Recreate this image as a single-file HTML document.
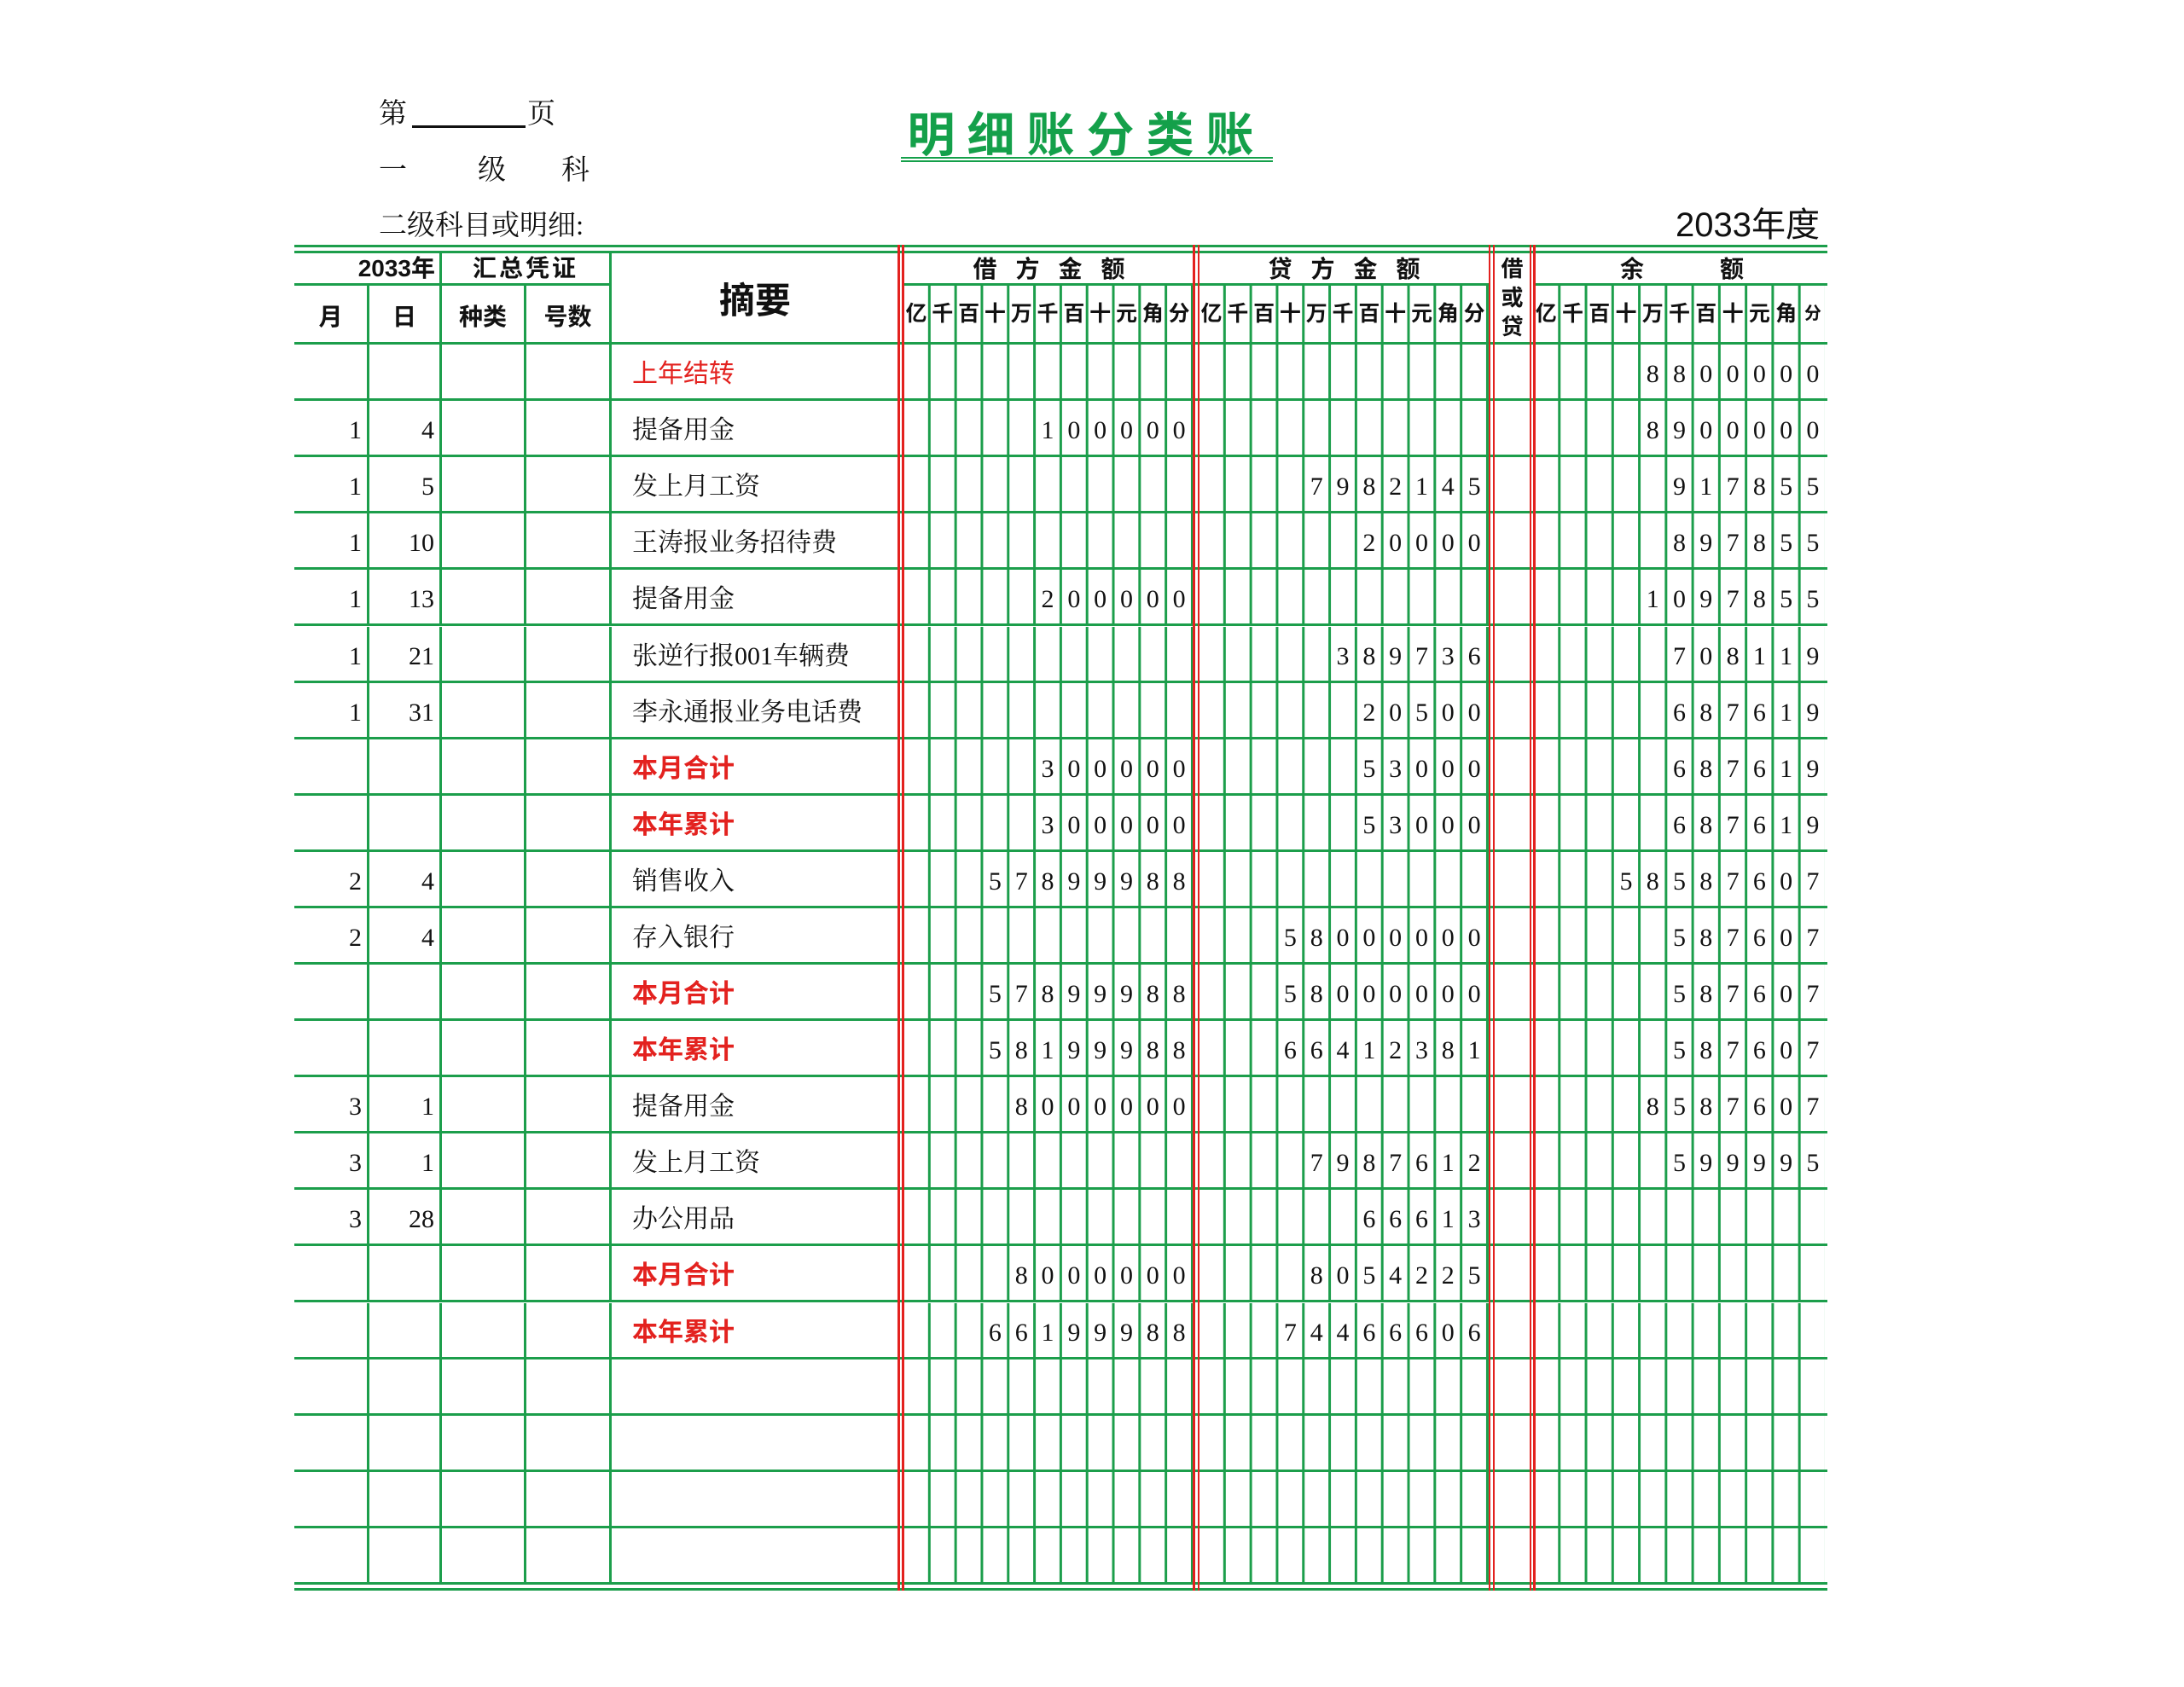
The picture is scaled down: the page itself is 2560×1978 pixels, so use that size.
<!DOCTYPE html>
<html><head><meta charset="utf-8"><style>
html,body{margin:0;padding:0;background:#fff}
body{width:2560px;height:1978px;position:relative;overflow:hidden;font-family:"Liberation Serif","Noto Serif CJK SC",serif;color:#111}
.a{position:absolute}
.hl{position:absolute;height:3px;background:#1c9e4b}
.vl{position:absolute;width:3px;background:#1c9e4b}
.rl{position:absolute;width:2.5px;background:#e3221f;top:287px;height:1578px}
.r{position:absolute;left:345px;width:1797px;height:66.09px;display:flex;border-bottom:3px solid #1c9e4b;box-sizing:border-box;line-height:70px;font-size:30px}
.r>div{box-sizing:border-box;height:100%;flex:none}
.m{width:88px;border-right:3px solid #1c9e4b;text-align:right;padding-right:6px}
.d{width:85px;border-right:3px solid #1c9e4b;text-align:right;padding-right:6px}
.k{width:99px;border-right:3px solid #1c9e4b}
.h{width:100px;border-right:3px solid #1c9e4b}
.z{width:336px;padding-left:24px;font-family:"Liberation Serif","Noto Serif CJK SC",serif;white-space:nowrap}
.z.rd{color:#e3221f;font-family:"Liberation Sans","Noto Sans CJK SC",sans-serif}
.z.rb{color:#e3221f;font-family:"Liberation Sans","Noto Sans CJK SC",sans-serif;font-weight:bold}
.s{width:7px}.s5{width:5px}
.j{width:41px}
.b,.bb{display:flex;justify-content:flex-end;background-repeat:repeat-x}
.b{width:339px;background-image:linear-gradient(to right,transparent calc(100% - 3px),#1c9e4b calc(100% - 3px));background-size:30.818px 100%}
.bb{width:344px;background-image:linear-gradient(to left,#fff 3px,transparent 3px),linear-gradient(to right,transparent calc(100% - 3px),#1c9e4b calc(100% - 3px));background-size:100% 100%,31.27px 100%;background-repeat:no-repeat,repeat-x}
.b i,.bb i{font-style:normal;display:inline-block;box-sizing:border-box;padding-right:3px;text-align:center}
.b i{width:30.818px}.bb i{width:31.27px}
.hd{position:absolute;font-family:"Liberation Sans","Noto Sans CJK SC",sans-serif;font-weight:bold;font-size:28px;text-align:center;line-height:36px;color:#111}
.un{position:absolute;top:335px;height:66px;display:flex;font-family:"Liberation Sans","Noto Sans CJK SC",sans-serif;font-weight:bold;font-size:25px;line-height:66px}
.un i{font-style:normal;display:inline-block;box-sizing:border-box;padding-right:3px;text-align:center}
.tp{position:absolute;font-family:"Liberation Serif","Noto Serif CJK SC",serif;font-size:33px;line-height:40px;color:#111}
</style></head><body>

<div class="tp" style="left:444px;top:114px">第</div>
<div class="a" style="left:483px;top:147px;width:133px;height:3px;background:#111"></div>
<div class="tp" style="left:618px;top:114px">页</div>
<div class="tp" style="left:444px;top:180px">一</div>
<div class="tp" style="left:560px;top:180px">级</div>
<div class="tp" style="left:658px;top:180px">科</div>
<div class="tp" style="left:444px;top:245px">二级科目或明细:</div>
<div class="a" style="left:1900px;top:241px;width:233px;text-align:right;font-family:'Liberation Sans','Noto Sans CJK SC',sans-serif;font-size:40px;line-height:46px;color:#111">2033年度</div>
<div class="a" style="left:1053px;top:126px;width:441px;text-align:center;font-family:'Liberation Sans','Noto Sans CJK SC',sans-serif;font-weight:bold;font-size:56px;line-height:66px;letter-spacing:14px;color:#14a04a">明细账分类账</div>
<div class="a" style="left:1056px;top:184px;width:436px;height:2px;background:#14a04a"></div>
<div class="a" style="left:1056px;top:188px;width:436px;height:2px;background:#14a04a"></div>

<div class="hl" style="left:345px;top:287px;width:1797px"></div>
<div class="hl" style="left:345px;top:294px;width:1797px"></div>
<div class="hl" style="left:345px;top:332px;width:372px"></div>
<div class="hl" style="left:1060px;top:332px;width:685px"></div>
<div class="hl" style="left:1798px;top:332px;width:344px"></div>
<div class="hl" style="left:345px;top:401px;width:1797px"></div>
<div class="vl" style="left:515px;top:297px;height:104px"></div>
<div class="vl" style="left:714px;top:297px;height:104px"></div>
<div class="vl" style="left:430px;top:335px;height:66px"></div>
<div class="vl" style="left:614px;top:335px;height:66px"></div>

<div class="hd" style="left:345px;top:297px;width:165px;text-align:right;font-family:'Liberation Sans Narrow','Liberation Sans','Noto Sans CJK SC',sans-serif">2033年</div>
<div class="hd" style="left:518px;top:297px;width:196px;letter-spacing:3px">汇总凭证</div>
<div class="hd" style="left:345px;top:354px;width:85px">月</div>
<div class="hd" style="left:433px;top:354px;width:82px">日</div>
<div class="hd" style="left:518px;top:354px;width:96px">种类</div>
<div class="hd" style="left:617px;top:354px;width:97px">号数</div>
<div class="hd" style="left:717px;top:328px;width:336px;font-size:42px;line-height:50px">摘要</div>
<div class="hd" style="left:1060px;top:298px;width:339px;letter-spacing:22px;text-indent:22px">借方金额</div>
<div class="hd" style="left:1406px;top:298px;width:339px;letter-spacing:22px;text-indent:22px">贷方金额</div>
<div class="hd" style="left:1752px;top:298px;width:41px;font-size:26px;line-height:34px;height:106px;overflow:hidden">借<br>或<br>贷</div>
<div class="hd" style="left:1893px;top:298px;width:40px">余</div>
<div class="hd" style="left:2010px;top:298px;width:40px">额</div>
<div class="un b" style="left:1060px;display:flex"><i>亿</i><i>千</i><i>百</i><i>十</i><i>万</i><i>千</i><i>百</i><i>十</i><i>元</i><i>角</i><i>分</i></div>
<div class="un b" style="left:1406px;display:flex"><i>亿</i><i>千</i><i>百</i><i>十</i><i>万</i><i>千</i><i>百</i><i>十</i><i>元</i><i>角</i><i>分</i></div>
<div class="un bb" style="left:1798px;display:flex"><i>亿</i><i>千</i><i>百</i><i>十</i><i>万</i><i>千</i><i>百</i><i>十</i><i>元</i><i>角</i><i style="font-size:20px">分</i></div>

<div class="r" style="top:404px"><div class="m"></div><div class="d"></div><div class="k"></div><div class="h"></div><div class="z rd">上年结转</div><div class="s"></div><div class="b"></div><div class="s"></div><div class="b"></div><div class="s"></div><div class="j"></div><div class="s5"></div><div class="bb"><i>8</i><i>8</i><i>0</i><i>0</i><i>0</i><i>0</i><i>0</i></div></div>
<div class="r" style="top:470.1px"><div class="m">1</div><div class="d">4</div><div class="k"></div><div class="h"></div><div class="z">提备用金</div><div class="s"></div><div class="b"><i>1</i><i>0</i><i>0</i><i>0</i><i>0</i><i>0</i></div><div class="s"></div><div class="b"></div><div class="s"></div><div class="j"></div><div class="s5"></div><div class="bb"><i>8</i><i>9</i><i>0</i><i>0</i><i>0</i><i>0</i><i>0</i></div></div>
<div class="r" style="top:536.2px"><div class="m">1</div><div class="d">5</div><div class="k"></div><div class="h"></div><div class="z">发上月工资</div><div class="s"></div><div class="b"></div><div class="s"></div><div class="b"><i>7</i><i>9</i><i>8</i><i>2</i><i>1</i><i>4</i><i>5</i></div><div class="s"></div><div class="j"></div><div class="s5"></div><div class="bb"><i>9</i><i>1</i><i>7</i><i>8</i><i>5</i><i>5</i></div></div>
<div class="r" style="top:602.3px"><div class="m">1</div><div class="d">10</div><div class="k"></div><div class="h"></div><div class="z">王涛报业务招待费</div><div class="s"></div><div class="b"></div><div class="s"></div><div class="b"><i>2</i><i>0</i><i>0</i><i>0</i><i>0</i></div><div class="s"></div><div class="j"></div><div class="s5"></div><div class="bb"><i>8</i><i>9</i><i>7</i><i>8</i><i>5</i><i>5</i></div></div>
<div class="r" style="top:668.4px"><div class="m">1</div><div class="d">13</div><div class="k"></div><div class="h"></div><div class="z">提备用金</div><div class="s"></div><div class="b"><i>2</i><i>0</i><i>0</i><i>0</i><i>0</i><i>0</i></div><div class="s"></div><div class="b"></div><div class="s"></div><div class="j"></div><div class="s5"></div><div class="bb"><i>1</i><i>0</i><i>9</i><i>7</i><i>8</i><i>5</i><i>5</i></div></div>
<div class="r" style="top:734.5px"><div class="m">1</div><div class="d">21</div><div class="k"></div><div class="h"></div><div class="z">张逆行报001车辆费</div><div class="s"></div><div class="b"></div><div class="s"></div><div class="b"><i>3</i><i>8</i><i>9</i><i>7</i><i>3</i><i>6</i></div><div class="s"></div><div class="j"></div><div class="s5"></div><div class="bb"><i>7</i><i>0</i><i>8</i><i>1</i><i>1</i><i>9</i></div></div>
<div class="r" style="top:800.5px"><div class="m">1</div><div class="d">31</div><div class="k"></div><div class="h"></div><div class="z">李永通报业务电话费</div><div class="s"></div><div class="b"></div><div class="s"></div><div class="b"><i>2</i><i>0</i><i>5</i><i>0</i><i>0</i></div><div class="s"></div><div class="j"></div><div class="s5"></div><div class="bb"><i>6</i><i>8</i><i>7</i><i>6</i><i>1</i><i>9</i></div></div>
<div class="r" style="top:866.6px"><div class="m"></div><div class="d"></div><div class="k"></div><div class="h"></div><div class="z rb">本月合计</div><div class="s"></div><div class="b"><i>3</i><i>0</i><i>0</i><i>0</i><i>0</i><i>0</i></div><div class="s"></div><div class="b"><i>5</i><i>3</i><i>0</i><i>0</i><i>0</i></div><div class="s"></div><div class="j"></div><div class="s5"></div><div class="bb"><i>6</i><i>8</i><i>7</i><i>6</i><i>1</i><i>9</i></div></div>
<div class="r" style="top:932.7px"><div class="m"></div><div class="d"></div><div class="k"></div><div class="h"></div><div class="z rb">本年累计</div><div class="s"></div><div class="b"><i>3</i><i>0</i><i>0</i><i>0</i><i>0</i><i>0</i></div><div class="s"></div><div class="b"><i>5</i><i>3</i><i>0</i><i>0</i><i>0</i></div><div class="s"></div><div class="j"></div><div class="s5"></div><div class="bb"><i>6</i><i>8</i><i>7</i><i>6</i><i>1</i><i>9</i></div></div>
<div class="r" style="top:998.8px"><div class="m">2</div><div class="d">4</div><div class="k"></div><div class="h"></div><div class="z">销售收入</div><div class="s"></div><div class="b"><i>5</i><i>7</i><i>8</i><i>9</i><i>9</i><i>9</i><i>8</i><i>8</i></div><div class="s"></div><div class="b"></div><div class="s"></div><div class="j"></div><div class="s5"></div><div class="bb"><i>5</i><i>8</i><i>5</i><i>8</i><i>7</i><i>6</i><i>0</i><i>7</i></div></div>
<div class="r" style="top:1064.9px"><div class="m">2</div><div class="d">4</div><div class="k"></div><div class="h"></div><div class="z">存入银行</div><div class="s"></div><div class="b"></div><div class="s"></div><div class="b"><i>5</i><i>8</i><i>0</i><i>0</i><i>0</i><i>0</i><i>0</i><i>0</i></div><div class="s"></div><div class="j"></div><div class="s5"></div><div class="bb"><i>5</i><i>8</i><i>7</i><i>6</i><i>0</i><i>7</i></div></div>
<div class="r" style="top:1131px"><div class="m"></div><div class="d"></div><div class="k"></div><div class="h"></div><div class="z rb">本月合计</div><div class="s"></div><div class="b"><i>5</i><i>7</i><i>8</i><i>9</i><i>9</i><i>9</i><i>8</i><i>8</i></div><div class="s"></div><div class="b"><i>5</i><i>8</i><i>0</i><i>0</i><i>0</i><i>0</i><i>0</i><i>0</i></div><div class="s"></div><div class="j"></div><div class="s5"></div><div class="bb"><i>5</i><i>8</i><i>7</i><i>6</i><i>0</i><i>7</i></div></div>
<div class="r" style="top:1197.1px"><div class="m"></div><div class="d"></div><div class="k"></div><div class="h"></div><div class="z rb">本年累计</div><div class="s"></div><div class="b"><i>5</i><i>8</i><i>1</i><i>9</i><i>9</i><i>9</i><i>8</i><i>8</i></div><div class="s"></div><div class="b"><i>6</i><i>6</i><i>4</i><i>1</i><i>2</i><i>3</i><i>8</i><i>1</i></div><div class="s"></div><div class="j"></div><div class="s5"></div><div class="bb"><i>5</i><i>8</i><i>7</i><i>6</i><i>0</i><i>7</i></div></div>
<div class="r" style="top:1263.2px"><div class="m">3</div><div class="d">1</div><div class="k"></div><div class="h"></div><div class="z">提备用金</div><div class="s"></div><div class="b"><i>8</i><i>0</i><i>0</i><i>0</i><i>0</i><i>0</i><i>0</i></div><div class="s"></div><div class="b"></div><div class="s"></div><div class="j"></div><div class="s5"></div><div class="bb"><i>8</i><i>5</i><i>8</i><i>7</i><i>6</i><i>0</i><i>7</i></div></div>
<div class="r" style="top:1329.3px"><div class="m">3</div><div class="d">1</div><div class="k"></div><div class="h"></div><div class="z">发上月工资</div><div class="s"></div><div class="b"></div><div class="s"></div><div class="b"><i>7</i><i>9</i><i>8</i><i>7</i><i>6</i><i>1</i><i>2</i></div><div class="s"></div><div class="j"></div><div class="s5"></div><div class="bb"><i>5</i><i>9</i><i>9</i><i>9</i><i>9</i><i>5</i></div></div>
<div class="r" style="top:1395.4px"><div class="m">3</div><div class="d">28</div><div class="k"></div><div class="h"></div><div class="z">办公用品</div><div class="s"></div><div class="b"></div><div class="s"></div><div class="b"><i>6</i><i>6</i><i>6</i><i>1</i><i>3</i></div><div class="s"></div><div class="j"></div><div class="s5"></div><div class="bb"></div></div>
<div class="r" style="top:1461.4px"><div class="m"></div><div class="d"></div><div class="k"></div><div class="h"></div><div class="z rb">本月合计</div><div class="s"></div><div class="b"><i>8</i><i>0</i><i>0</i><i>0</i><i>0</i><i>0</i><i>0</i></div><div class="s"></div><div class="b"><i>8</i><i>0</i><i>5</i><i>4</i><i>2</i><i>2</i><i>5</i></div><div class="s"></div><div class="j"></div><div class="s5"></div><div class="bb"></div></div>
<div class="r" style="top:1527.5px"><div class="m"></div><div class="d"></div><div class="k"></div><div class="h"></div><div class="z rb">本年累计</div><div class="s"></div><div class="b"><i>6</i><i>6</i><i>1</i><i>9</i><i>9</i><i>9</i><i>8</i><i>8</i></div><div class="s"></div><div class="b"><i>7</i><i>4</i><i>4</i><i>6</i><i>6</i><i>6</i><i>0</i><i>6</i></div><div class="s"></div><div class="j"></div><div class="s5"></div><div class="bb"></div></div>
<div class="r" style="top:1593.6px"><div class="m"></div><div class="d"></div><div class="k"></div><div class="h"></div><div class="z"></div><div class="s"></div><div class="b"></div><div class="s"></div><div class="b"></div><div class="s"></div><div class="j"></div><div class="s5"></div><div class="bb"></div></div>
<div class="r" style="top:1659.7px"><div class="m"></div><div class="d"></div><div class="k"></div><div class="h"></div><div class="z"></div><div class="s"></div><div class="b"></div><div class="s"></div><div class="b"></div><div class="s"></div><div class="j"></div><div class="s5"></div><div class="bb"></div></div>
<div class="r" style="top:1725.8px"><div class="m"></div><div class="d"></div><div class="k"></div><div class="h"></div><div class="z"></div><div class="s"></div><div class="b"></div><div class="s"></div><div class="b"></div><div class="s"></div><div class="j"></div><div class="s5"></div><div class="bb"></div></div>
<div class="r" style="top:1791.9px"><div class="m"></div><div class="d"></div><div class="k"></div><div class="h"></div><div class="z"></div><div class="s"></div><div class="b"></div><div class="s"></div><div class="b"></div><div class="s"></div><div class="j"></div><div class="s5"></div><div class="bb"></div></div>
<div class="hl" style="left:345px;top:1862px;width:1797px"></div>

<div class="rl" style="left:1052px"></div><div class="rl" style="left:1057px"></div>
<div class="rl" style="left:1398px"></div><div class="rl" style="left:1403.5px"></div>
<div class="rl" style="left:1744.5px"></div><div class="rl" style="left:1749.5px"></div>
<div class="rl" style="left:1792.5px"></div><div class="rl" style="left:1797px"></div>
</body></html>
